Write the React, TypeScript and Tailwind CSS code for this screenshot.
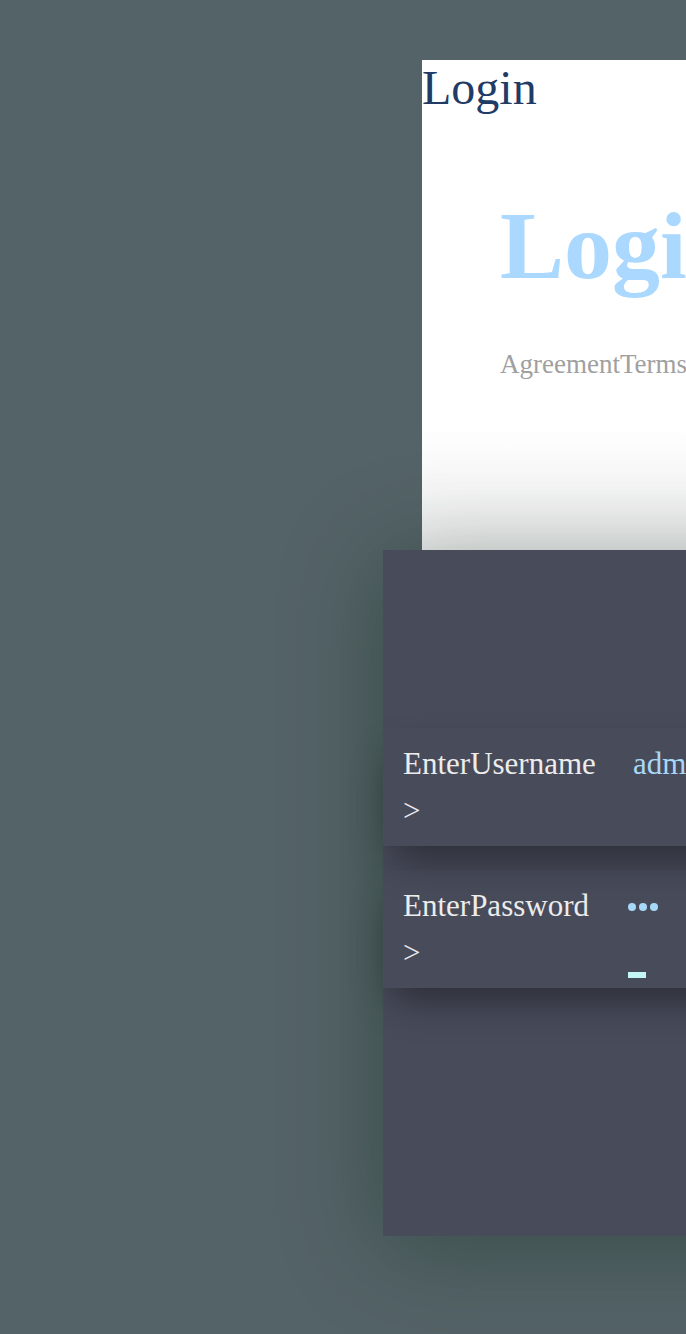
import React from "react";

const serif = { fontFamily: '"Liberation Serif", "Times New Roman", serif' };

function Row({ label, children }: { label: string; children: React.ReactNode }) {
  return (
    <div className="flex h-[118px] items-start pl-[20px] pt-[12px] shadow-[0_20px_40px_-10px_rgba(0,0,0,0.45)]">
      <div className="w-[205px] shrink-0 text-[31px] leading-[47px] text-[#ececec]">{label} &gt;</div>
      <div className="ml-[20px] flex-1">{children}</div>
    </div>
  );
}

export default function App() {
  return (
    <div
      className="relative h-[1334px] w-[686px] overflow-hidden bg-[#546367] pt-[60px]"
      style={serif}
    >
      <div className="ml-[422px] h-[490px] w-[520px] bg-[linear-gradient(to_bottom,#ffffff_0%,#ffffff_74%,#f0f0f0_100%)]">
        <div className="text-[48px] leading-[1.15] text-[#1f3b66]">Login</div>
        <div className="ml-[78px] mt-[83px] whitespace-nowrap text-[96px] font-bold leading-none text-[#aad8fe]">
          Login
        </div>
        <div className="ml-[78px] mt-[55px] whitespace-nowrap text-[27px] leading-[1.15] text-[#a0a0a0]">
          AgreementTerms
        </div>
      </div>
      <div className="relative ml-[383px] h-[686px] w-[600px] bg-[#484b5a] pt-[178px] shadow-[0_10px_90px_rgba(20,45,30,0.42)]">
        <Row label="EnterUsername">
          <div className="whitespace-nowrap pl-[5px] text-[31px] leading-[47px] text-[#a8d8f8]">admin</div>
        </Row>
        <div className="h-[24px]" />
        <Row label="EnterPassword">
          <div className="flex h-[47px] items-center gap-[3px] pt-[2px]">
            <span className="h-[8px] w-[8px] rounded-full bg-[#a8d8f8]" />
            <span className="h-[8px] w-[8px] rounded-full bg-[#a8d8f8]" />
            <span className="h-[8px] w-[8px] rounded-full bg-[#a8d8f8]" />
          </div>
          <div className="mt-[43px] h-[6px] w-[18px] bg-[#c4f6f8]" />
        </Row>
      </div>
    </div>
  );
}
